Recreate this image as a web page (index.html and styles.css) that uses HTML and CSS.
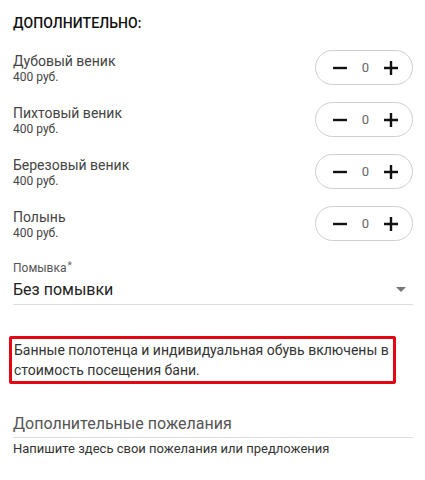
FILE: index.html
```html
<!DOCTYPE html>
<html lang="ru">
<head>
<meta charset="utf-8">
<link rel="stylesheet" href="styles.css">
</head>
<body>
<div class="page">
  <h2 class="title">ДОПОЛНИТЕЛЬНО:</h2>
  <div class="items">
    <div class="item">
      <div class="info"><div class="name">Дубовый веник</div><div class="price">400 руб.</div></div>
      <div class="stepper">
        <svg class="ico" viewBox="0 0 14 14"><path d="M0 7H14" /></svg>
        <span class="count">0</span>
        <svg class="ico" viewBox="0 0 14 14"><path d="M0 7H14M7 0V14" /></svg>
      </div>
    </div>
    <div class="item">
      <div class="info"><div class="name">Пихтовый веник</div><div class="price">400 руб.</div></div>
      <div class="stepper">
        <svg class="ico" viewBox="0 0 14 14"><path d="M0 7H14" /></svg>
        <span class="count">0</span>
        <svg class="ico" viewBox="0 0 14 14"><path d="M0 7H14M7 0V14" /></svg>
      </div>
    </div>
    <div class="item">
      <div class="info"><div class="name">Березовый веник</div><div class="price">400 руб.</div></div>
      <div class="stepper">
        <svg class="ico" viewBox="0 0 14 14"><path d="M0 7H14" /></svg>
        <span class="count">0</span>
        <svg class="ico" viewBox="0 0 14 14"><path d="M0 7H14M7 0V14" /></svg>
      </div>
    </div>
    <div class="item">
      <div class="info"><div class="name">Полынь</div><div class="price">400 руб.</div></div>
      <div class="stepper">
        <svg class="ico" viewBox="0 0 14 14"><path d="M0 7H14" /></svg>
        <span class="count">0</span>
        <svg class="ico" viewBox="0 0 14 14"><path d="M0 7H14M7 0V14" /></svg>
      </div>
    </div>
  </div>
  <div class="select">
    <div class="select-label">Помывка<sup class="star">*</sup></div>
    <div class="select-field">
      <span class="select-value">Без помывки</span>
      <svg class="caret" viewBox="0 0 10 5"><path d="M0 0H10L5 5Z" /></svg>
    </div>
  </div>
  <div class="notice">Банные полотенца и индивидуальная обувь включены в стоимость посещения бани.</div>
  <div class="wishes">
    <div class="wishes-field">Дополнительные пожелания</div>
    <div class="wishes-help">Напишите здесь свои пожелания или предложения</div>
  </div>
</div>
</body>
</html>
```

FILE: styles.css
```css
* { box-sizing: border-box; }
html, body { margin: 0; padding: 0; background: #fff; }
body { font-family: Roboto, "Noto Sans", Arial, sans-serif; color: #222; }
.page { width: 425px; padding: 14px 12px 0 13px; }
.title { margin: 0; font-size: 14px; font-weight: 500; line-height: 18px; color: #111; letter-spacing: 0.1px; }
.items { display: flex; flex-direction: column; gap: 17px; margin-top: 18px; }
.item { display: flex; align-items: center; justify-content: space-between; height: 35px; }
.info { display: flex; flex-direction: column; padding-top: 1px; }
.name { font-size: 14px; line-height: 18px; color: #444; }
.price { font-size: 12px; line-height: 14px; color: #444; }
.stepper { width: 98px; height: 35px; border: 1px solid #cfcfcf; border-radius: 18px; display: flex; align-items: center; justify-content: space-between; padding: 0 14px 0 17px; }
.ico { width: 14px; height: 14px; stroke: #111; stroke-width: 2.4; fill: none; }
.count { font-size: 13px; color: #666; }
.select { margin-top: 20px; }
.select-label { font-size: 12px; line-height: 14px; color: #555; }
.star { font-size: 10px; vertical-align: top; position: relative; top: -2px; margin-left: 1px; color: #666; }
.select-field { display: flex; align-items: center; justify-content: space-between; border-bottom: 1px solid #ddd; height: 30px; padding-right: 7px; }
.select-value { font-size: 16px; color: #222; }
.caret { width: 10px; height: 5px; fill: #777; }
.notice { margin: 31px 17px 0 -4px; border: 3px solid #e30613; border-radius: 2px; padding: 1px 0 1px 2px; font-size: 14px; line-height: 20px; color: #333; }
.wishes { margin-top: 30px; }
.wishes-field { font-size: 16px; line-height: 20px; color: #555; border-bottom: 1px solid #ddd; padding-bottom: 3px; }
.wishes-help { font-size: 13px; line-height: 15px; color: #333; margin-top: 3px; }
```
